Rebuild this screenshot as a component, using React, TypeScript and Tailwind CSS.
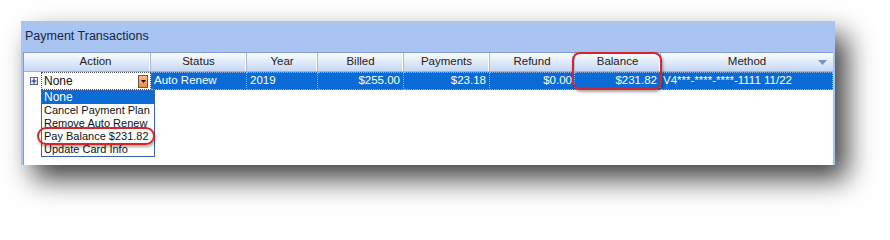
const cols = [
  { label: 'Status', w: 'w-[96px]' },
  { label: 'Year', w: 'w-[71px]' },
  { label: 'Billed', w: 'w-[86px]' },
  { label: 'Payments', w: 'w-[86px]' },
  { label: 'Refund', w: 'w-[85px]' },
  { label: 'Balance', w: 'w-[86px]' },
];

const row = [
  { text: 'Auto Renew', w: 'w-[96px]', align: 'justify-start pl-[3px]' },
  { text: '2019', w: 'w-[71px]', align: 'justify-start pl-[3px]' },
  { text: '$255.00', w: 'w-[86px]', align: 'justify-end pr-[3px]' },
  { text: '$23.18', w: 'w-[86px]', align: 'justify-end pr-[3px]' },
  { text: '$0.00', w: 'w-[85px]', align: 'justify-end pr-[2px]' },
  { text: '$231.82', w: 'w-[86px]', align: 'justify-end pr-[3px]' },
];

const options = ['None', 'Cancel Payment Plan', 'Remove Auto Renew', 'Pay Balance $231.82', 'Update Card Info'];

function HeaderCell({ label, w }: { label: string; w: string }) {
  return (
    <div className={`${w} h-full flex items-center justify-center border-r border-r-[#a9bcdc] shadow-[inset_-1px_0_0_#ffffff]`}>
      {label}
    </div>
  );
}

export default function App() {
  return (
    <div className="w-[890px] h-[220px] bg-white pt-[21px] pl-[21px] font-['Liberation_Sans',Arial,sans-serif] text-[11.5px] text-[#1a1a1a]">
      <div className="relative w-[814px] h-[144px] bg-[#a9c4f1] flex flex-col shadow-[12px_14px_26px_rgba(0,0,0,0.75)]">
        <div className="h-[31px] flex items-center pl-[4px] text-[12.5px] text-[#18263f]">Payment Transactions</div>

        <div className="flex-1 mx-[2px] bg-white border-l border-t border-[#7f9dd0] flex flex-col">
          {/* header */}
          <div className="h-[19px] flex bg-gradient-to-b from-[#fbfdff] to-[#c6d7f3] border-b border-[#9fb4d8] text-[#222]">
            <div className="w-[127px] h-full flex items-center pl-[17px] border-r border-r-[#a9bcdc] shadow-[inset_-1px_0_0_#ffffff]">
              <span className="flex-1 text-center">Action</span>
            </div>
            {cols.map((c) => (
              <HeaderCell key={c.label} label={c.label} w={c.w} />
            ))}
            <div className="flex-1 h-full flex items-center justify-center relative">
              Method
              <svg className="absolute right-[6px] top-[7px]" width="9" height="5" viewBox="0 0 9 5">
                <path d="M0 0H9L4.5 5Z" fill="#7893c4" />
              </svg>
            </div>
          </div>

          {/* selected row */}
          <div className="h-[18px] flex">
            <div className="w-[17px] h-full flex items-center justify-center pl-[2px]">
              <div className="w-[8px] h-[8px] border border-[#4d6896] bg-gradient-to-b from-white to-[#d7e2f5] flex items-center justify-center">
                <svg width="6" height="6" viewBox="0 0 6 6">
                  <path d="M0.5 3H5.5M3 0.5V5.5" stroke="#1d2f57" strokeWidth="1.2" />
                </svg>
              </div>
            </div>
            <div className="w-[110px] h-full flex items-center border border-dotted border-[#555] bg-white">
              <span className="flex-1 pl-[2px] text-[#111] text-[12px]">None</span>
              <div className="w-[10px] h-[13px] mr-[2px] border border-[#6b5a4a] bg-gradient-to-b from-[#fbb886] to-[#f08a3c] flex items-center justify-center">
                <svg width="5" height="3" viewBox="0 0 5 3">
                  <path d="M0 0H5L2.5 3Z" fill="#111" />
                </svg>
              </div>
            </div>
            {row.map((c) => (
              <div
                key={c.text}
                className={`${c.w} h-full flex items-center ${c.align} bg-[#0b6bd6] text-white border-y border-r border-dotted border-[#8fb3e6]`}
              >
                {c.text}
              </div>
            ))}
            <div className="flex-1 h-full flex items-center pl-[2px] bg-[#0b6bd6] text-white border border-dotted border-[#8fb3e6] border-l-0">
              V4***-****-****-1111 11/22
            </div>
          </div>
          <div className="flex-1" />
        </div>

        {/* open dropdown list */}
        <div className="absolute left-[20px] top-[69px] w-[114px] border border-[#3d62ad] bg-white flex flex-col text-[11px]">
          {options.map((o, i) => (
            <div
              key={o}
              className={`h-[13px] leading-[13px] pl-[2px] whitespace-nowrap ${i === 0 ? 'bg-[#0b6bd6] text-white text-[12px]' : 'text-[#111]'}`}
            >
              {o}
            </div>
          ))}
        </div>

        {/* annotations */}
        <div className="absolute left-[16px] top-[106px] w-[118px] h-[18px] rounded-[9px] border-2 border-[#d6262a] shadow-[1px_2px_3px_rgba(0,0,0,0.35)]" />
        <div className="absolute left-[551px] top-[31px] w-[90px] h-[38px] rounded-[8px] border-2 border-[#d6262a] shadow-[1px_2px_3px_rgba(0,0,0,0.35)]" />
      </div>
    </div>
  );
}
